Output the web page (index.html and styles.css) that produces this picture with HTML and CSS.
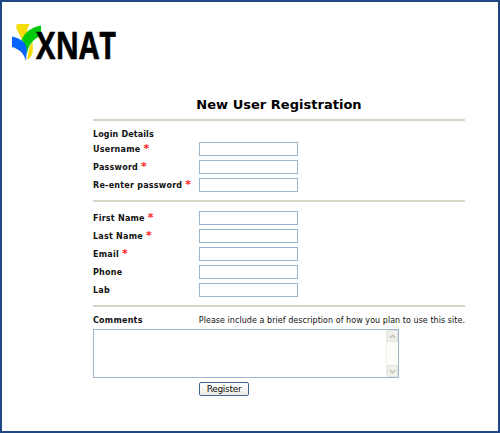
FILE: index.html
```
<!DOCTYPE html>
<html lang="en">
<head>
<meta charset="utf-8">
<title>XNAT - New User Registration</title>
<link rel="stylesheet" href="styles.css">
</head>
<body>
<header class="header">
  <svg class="logo" width="112" height="50" viewBox="0 0 112 50" role="img" aria-label="XNAT">
    <path fill="#f5dc08" d="M4.500 .4C8 -.1 13 0 18 .2C15 4 15 6 16 9L10 16C9 11 3 6 4.500 .4Z"/>
    <path fill="#f5dc08" d="M15.500 36C16 28 17 22 20.500 18C20.500 23 23 31 15.500 36Z"/>
    <path fill="#00ca0b" d="M9.500 16C13 8 20 3 29 1.500V12C21 15 16 21 14.800 31C14 25 13 19 9.500 16Z"/>
    <path fill="#0864ff" d="M0 12.500C8 14.500 14.800 18 14.800 26L14 37C12 29 7 25 0 23Z"/>
    <text class="logo-text" x="24" y="35" textLength="80" lengthAdjust="spacingAndGlyphs">XNAT</text>
  </svg>
</header>
<form class="form">
  <h1 class="title">New User Registration</h1>
  <section class="group login">
    <h2 class="heading">Login Details</h2>
    <label class="row"><span class="label">Username <b class="req">*</b></span><input class="field" type="text"></label>
    <label class="row"><span class="label">Password <b class="req">*</b></span><input class="field" type="password"></label>
    <label class="row"><span class="label">Re-enter password <b class="req">*</b></span><input class="field" type="password"></label>
  </section>
  <section class="group person">
    <label class="row"><span class="label">First Name <b class="req">*</b></span><input class="field" type="text"></label>
    <label class="row"><span class="label">Last Name <b class="req">*</b></span><input class="field" type="text"></label>
    <label class="row"><span class="label">Email <b class="req">*</b></span><input class="field" type="text"></label>
    <label class="row"><span class="label">Phone</span><input class="field" type="text"></label>
    <label class="row"><span class="label">Lab</span><input class="field" type="text"></label>
  </section>
  <section class="group comments">
    <div class="row"><span class="label">Comments</span><span class="hint">Please include a brief description of how you plan to use this site.</span></div>
    <div class="area">
      <textarea class="text" aria-label="Comments"></textarea>
      <div class="bar">
        <span class="arrow"><svg width="7" height="5" viewBox="0 0 7 5"><path d="M.8 4L3.500 1.300L6.200 4"/></svg></span>
        <span class="arrow"><svg width="7" height="5" viewBox="0 0 7 5"><path d="M.8 1L3.500 3.700L6.200 1"/></svg></span>
      </div>
    </div>
    <button class="submit" type="button">Register</button>
  </section>
</form>
</body>
</html>
```
FILE: styles.css
```
* { box-sizing: border-box; }
body {
  margin: 0;
  height: 433px;
  border: 2px solid #1f4781;
  background: #fff;
  color: #111;
  font-family: "DejaVu Sans", Verdana, sans-serif;
  font-size: 8px;
  overflow: hidden;
}
.header { height: 93px; padding: 22px 0 0 10px; }
.logo { display: block; overflow: visible; }
.logo-text { font: bold 37px "Open Sans", sans-serif; fill: #000; stroke: #000; stroke-width: .5px; }
.form { width: 372px; margin-left: 91px; }
.title {
  margin: 0;
  height: 24px;
  font-size: 13px;
  line-height: 19px;
  letter-spacing: 0.02px;
  text-align: center;
  color: #000;
}
.group { border-top: 2px solid #d8d5c6; }
.login { height: 81px; padding-top: 8px; }
.person { height: 105px; padding-top: 7px; }
.comments { padding-top: 4px; }
.heading { margin: 0; height: 11px; font-size: 8px; line-height: 11px; letter-spacing: 0.14px; }
.row { display: flex; align-items: center; height: 18px; }
.label { width: 106px; font-weight: bold; white-space: nowrap; letter-spacing: 0.24px; }
.req { color: #f22; font-size: 11px; line-height: 8px; }
.field {
  width: 99px;
  height: 14px;
  padding: 0 2px;
  border: 1px solid #9bb5ce;
  background: #fff;
  font: inherit;
  outline: none;
}
.hint { white-space: nowrap; letter-spacing: 0.045px; }
.area {
  display: flex;
  width: 306px;
  height: 49px;
  border: 1px solid #9bb5ce;
}
.text { flex: 1; border: 0; padding: 2px; resize: none; outline: none; font: inherit; overflow: hidden; }
.bar {
  display: flex;
  flex-direction: column;
  justify-content: space-between;
  width: 12px;
  background: #fcfcf8;
  border-left: 1px solid #eeede5;
}
.arrow {
  display: grid;
  place-items: center;
  height: 12px;
  border: 1px solid #e5e4dc;
  border-radius: 1px;
  background: #f1f0e9;
}
.arrow path { fill: none; stroke: #bfbeb7; stroke-width: 1.5; }
.submit {
  display: block;
  width: 50px;
  height: 14px;
  margin: 4px 0 0 106px;
  padding: 0;
  border: 1px solid #41698f;
  border-radius: 2px;
  background: linear-gradient(#fff, #ecebe4);
  color: #111;
  font: 9px/11px "DejaVu Sans", Verdana, sans-serif;
  letter-spacing: -0.3px;
}
```
